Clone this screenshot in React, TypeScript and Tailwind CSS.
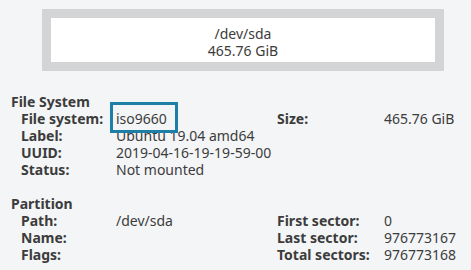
import React from "react";

const Row = ({ l, v, rl, rv, focus }: { l: string; v: string; rl?: string; rv?: string; focus?: boolean }) => (
  <>
    <div className="font-bold">{l}</div>
    <div className="relative">
      {v}
      {focus && (
        <div className="absolute z-10 left-[-6px] top-[-8px] w-[68px] h-[31px] border-[3px] border-[#1d7ea6]" />
      )}
    </div>
    <div className="font-bold">{rl ?? ""}</div>
    <div>{rv ?? ""}</div>
  </>
);

export default function App() {
  return (
    <div
      className="w-[471px] h-[270px] bg-[#f4f5f7] text-[#3c3c3c] text-[14px] leading-[17px] overflow-hidden"
      style={{ fontFamily: '"Noto Sans", "Open Sans", sans-serif' }}
    >
      <div className="pt-[9px] pl-[42px]">
        <div className="w-[402px] h-[62px] bg-[#d3d4d5] p-[9px]">
          <div className="w-full h-full bg-white flex flex-col items-center pt-[7px]">
            <div>/dev/sda</div>
            <div>465.76 GiB</div>
          </div>
        </div>
      </div>
      <div className="pt-[22px] pl-[11px]">
        <div className="font-bold">File System</div>
        <div className="pl-[10px] grid grid-cols-[95px_161px_107px_auto]">
          <Row l="File system:" v="iso9660" rl="Size:" rv="465.76 GiB" focus />
          <Row l="Label:" v="Ubuntu 19.04 amd64" />
          <Row l="UUID:" v="2019-04-16-19-19-59-00" />
          <Row l="Status:" v="Not mounted" />
        </div>
        <div className="font-bold mt-[17px]">Partition</div>
        <div className="pl-[10px] grid grid-cols-[95px_161px_107px_auto]">
          <Row l="Path:" v="/dev/sda" rl="First sector:" rv="0" />
          <Row l="Name:" v="" rl="Last sector:" rv="976773167" />
          <Row l="Flags:" v="" rl="Total sectors:" rv="976773168" />
        </div>
      </div>
    </div>
  );
}
